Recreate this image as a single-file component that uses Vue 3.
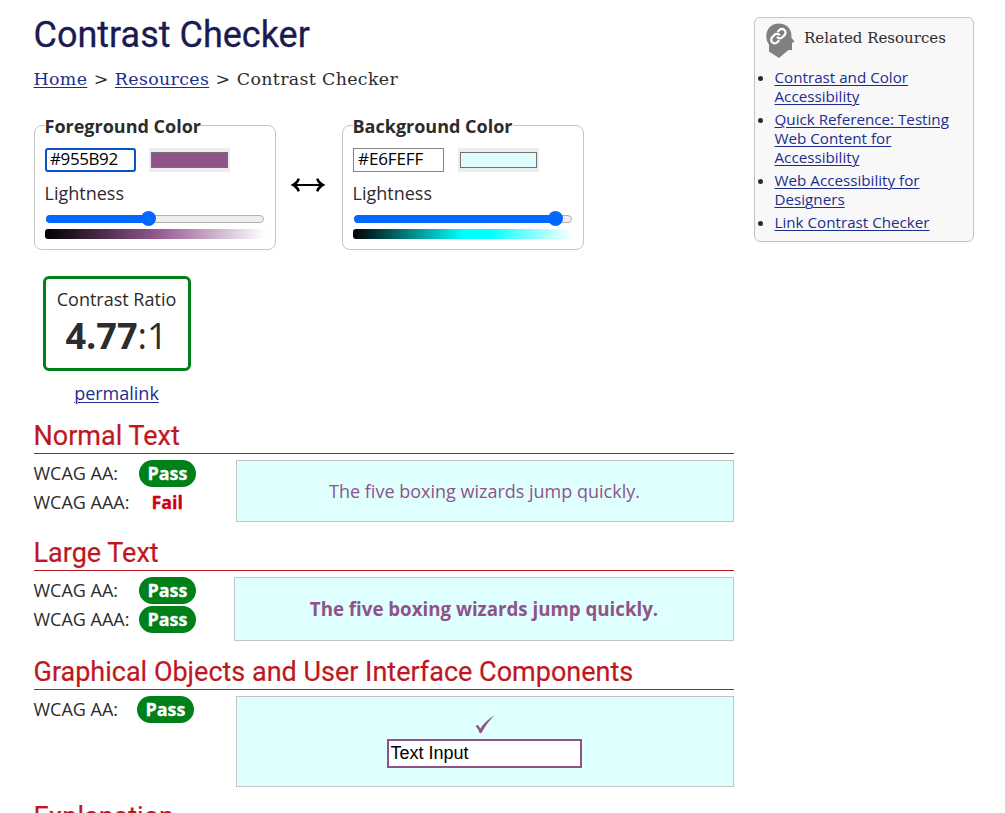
<script setup>
import { ref } from 'vue'

const panels = ref([
  { title: 'Foreground Color', hex: '#955B92', kind: 'fg', position: 102 },
  { title: 'Background Color', hex: '#E6FEFF', kind: 'bg', position: 201 },
])
const textInput = ref('Text Input')
</script>

<template>
  <div class="page">
    <main>
      <h1><span>Contrast Checker</span></h1>
      <nav class="crumbs"><a>Home</a><i>&gt;</i><a>Resources</a><i>&gt;</i><span class="here">Contrast Checker</span></nav>

      <div class="pickers">
        <template v-for="(p, n) in panels" :key="p.kind">
          <div v-if="n" class="swap">
            <svg width="36" height="18" viewBox="0 0 36 18">
              <path d="M4 9H32" stroke="#000" stroke-width="2" fill="none" />
              <path d="M.5 9Q6 6.500 7.600 2.300L10 3Q9 6.600 6 9Q9 11.400 10 15L7.600 15.700Q6 11.500.5 9ZM35.500 9Q30 6.500 28.400 2.300L26 3Q27 6.600 30 9Q27 11.400 26 15L28.400 15.700Q30 11.500 35.500 9Z" fill="#000" />
            </svg>
          </div>
          <section class="panel" :class="p.kind">
            <h3><span>{{ p.title }}</span></h3>
            <div class="values">
              <input v-model="p.hex" type="text" class="hex" />
              <div class="swatch"><div></div></div>
            </div>
            <div class="label">Lightness</div>
            <div class="slider">
              <div class="fill" :style="{ width: p.position + 'px' }"></div>
              <div class="thumb" :style="{ left: p.position - 8 + 'px' }"></div>
            </div>
            <div class="ramp"></div>
          </section>
        </template>
      </div>

      <div class="result">
        <div class="ratio">
          <div class="ratio-label">Contrast Ratio</div>
          <div class="ratio-value"><b>4.77</b>:1</div>
        </div>
        <a class="permalink">permalink</a>
      </div>

      <section class="level normal">
        <h2>Normal Text</h2>
        <div class="row">
          <div class="scores">
            <div><span class="name">WCAG AA:</span><b class="pass">Pass</b></div>
            <div><span class="name">WCAG AAA:</span><b class="fail">Fail</b></div>
          </div>
          <div class="sample"><span>The five boxing wizards jump quickly.</span></div>
        </div>
      </section>

      <section class="level large">
        <h2>Large Text</h2>
        <div class="row">
          <div class="scores">
            <div><span class="name">WCAG AA:</span><b class="pass">Pass</b></div>
            <div><span class="name">WCAG AAA:</span><b class="pass">Pass</b></div>
          </div>
          <div class="sample"><b>The five boxing wizards jump quickly.</b></div>
        </div>
      </section>

      <section class="level objects">
        <h2>Graphical Objects and User Interface Components</h2>
        <div class="row">
          <div class="scores">
            <div><span class="name">WCAG AA:</span><b class="pass">Pass</b></div>
          </div>
          <div class="sample">
            <svg class="check" width="20" height="19" viewBox="0 0 20 19">
              <path d="M.5 11.200Q2 9.600 3.600 10.400L5.200 13.700Q11 5 19.400.4Q12 7.500 6.200 18.200H4.700Q3 13 .5 11.200Z" fill="#905389" />
            </svg>
            <input v-model="textInput" type="text" />
          </div>
        </div>
      </section>

      <h2 class="explanation">Explanation</h2>
    </main>

    <aside>
      <div class="aside-head">
        <svg width="30" height="36" viewBox="0 0 30 36">
          <path d="M13.500.5C20 .3 26.300 4.600 26.500 12L26.300 14.500L29.500 18.500L27 20V27H23.500L14 35L4 28.500V21.500C-1 15.500.2 1.200 13.500.5Z" fill="#808080" />
          <g fill="none" stroke="#fff" stroke-width="3.100" transform="translate(4.700 4.500) scale(.72)">
            <path d="M10 13a5 5 0 0 0 7.540.540l3-3a5 5 0 0 0-7.070-7.070l-2.720 2.710" />
            <path d="M14 11a5 5 0 0 0-7.540-.540l-3 3a5 5 0 0 0 7.070 7.070l2.710-2.710" />
          </g>
        </svg>
        <h4>Related Resources</h4>
      </div>
      <ul>
        <li><a>Contrast and Color<br />Accessibility</a></li>
        <li><a>Quick Reference: Testing<br />Web Content for<br />Accessibility</a></li>
        <li><a>Web Accessibility for<br />Designers</a></li>
        <li><a>Link Contrast Checker</a></li>
      </ul>
    </aside>
  </div>
</template>

<style>
html,
body {
  background: #fff;
  overflow: hidden;
}
</style>

<style scoped>
* {
  box-sizing: border-box;
}
.page {
  height: 813px;
  overflow: hidden;
  display: flex;
  align-items: flex-start;
  gap: 20px;
  padding: 0 0 0 34px;
  font-family: 'Open Sans', 'Noto Sans', sans-serif;
  font-size: 18px;
  color: #2c2c2c;
  white-space: nowrap;
}
main {
  width: 700px;
  flex: none;
}
h1,
h2,
h3,
h4 {
  margin: 0;
}
a {
  color: #1d2d8f;
  text-decoration: underline;
  text-decoration-thickness: 1px;
  text-underline-offset: 2px;
}
h1 {
  font: 400 36px/42px Roboto, sans-serif;
  padding-top: 14px;
  height: 56px;
  color: #1b1b52;
  margin-left: -0.5px;
  -webkit-text-stroke: 0.3px;
}
.crumbs {
  font: 17.4px/24px 'DejaVu Serif', serif;
  letter-spacing: 0.35px;
  margin: 11px 0 0 -0.5px;
  height: 24px;
}
.crumbs i {
  font-style: normal;
  margin: 0 6.3px;
}
.pickers {
  display: flex;
  margin-top: 34px;
  height: 125px;
}
.panel {
  width: 242px;
  height: 125px;
  border: 1px solid #c4c4c4;
  border-radius: 8px;
  padding: 0 10px;
}
.panel h3 {
  font-size: 18px;
  line-height: 24px;
  height: 22px;
  margin-top: -12px;
  text-indent: -0.5px;
}
.panel h3 span {
  background: #fff;
}
.values {
  display: flex;
  gap: 14px;
  height: 24px;
  margin-top: 12px;
}
.fg .values {
  gap: 13px;
}
.hex {
  width: 91px;
  height: 24px;
  border: 1px solid #858585;
  background: #fff;
  padding: 0 0 3px 4px;
  font: 17px/20px 'Open Sans', sans-serif;
  letter-spacing: -0.1px;
  color: #000;
  outline: none;
}
.fg .hex {
  border: 2px solid #0a53c5;
  border-radius: 3px;
  padding: 0 0 3px 3px;
  letter-spacing: -0.4px;
}
.swatch {
  width: 81px;
  height: 24px;
  background: #ededed;
  padding: 4px 2px;
}
.swatch div {
  height: 16px;
  border: 1px solid #717171;
  background: #dfffff;
}
.fg .swatch div {
  background: #905389;
}
.label {
  line-height: 24px;
  margin-top: 9px;
  text-indent: -0.5px;
}
.slider {
  position: relative;
  margin: 10px 0 0 1px;
  width: 218px;
  height: 8px;
  border: 1px solid #b2b2b2;
  border-radius: 4px;
  background: #ededed;
}
.fill {
  margin: -1px;
  height: 8px;
  border-radius: 4px;
  background: #0068ff;
}
.thumb {
  position: absolute;
  top: -5px;
  width: 15px;
  height: 15px;
  border-radius: 50%;
  background: #0068ff;
}
.ramp {
  margin-top: 6px;
  height: 10px;
  border-radius: 3px;
  background: linear-gradient(90deg, #000, #92558e 50%, #fff);
}
.bg .ramp {
  background: linear-gradient(90deg, #000, #00ffff 50%, #00ffff 62%, #fff);
}
.swap {
  width: 66px;
  padding: 50px 0 0 14px;
}
.result {
  width: 148px;
  margin: 26px 0 0 9px;
  display: flex;
  flex-direction: column;
  align-items: center;
}
.ratio {
  width: 148px;
  height: 95px;
  border: 3px solid #008018;
  border-radius: 6px;
  text-align: center;
  padding: 8px 1px 0 0;
}
.ratio-label {
  line-height: 24px;
}
.ratio-value {
  font-size: 36px;
  line-height: 50px;
}
.permalink {
  line-height: 24px;
  margin: 10px 1px 0 0;
}
.level {
  height: 118px;
}
.level.normal {
  margin-top: 14px;
  height: 117px;
}
.level.large {
  height: 119px;
}
.level.objects {
  height: 145px;
}
h2 {
  font: 400 27px/34px Roboto, sans-serif;
  color: #bf1722;
  height: 35px;
  border-bottom: 1px solid #bf1722;
  text-indent: -0.5px;
  -webkit-text-stroke: 0.2px;
}
.row {
  display: flex;
  justify-content: space-between;
  margin-top: 6px;
}
.scores div {
  display: flex;
  height: 27px;
  line-height: 27px;
  margin-bottom: 2px;
}
.name {
  width: 105px;
  text-indent: -0.5px;
  line-height: 27px;
}
.objects .name {
  width: 103px;
}
.pass {
  width: 57px;
  height: 27px;
  line-height: 26px;
  border-radius: 14px;
  text-align: center;
  background: #008018;
  color: #fff;
  font-size: 17.9px;
  -webkit-text-stroke: 0.3px;
}
.fail {
  color: #cc0018;
  margin-left: 12.5px;
  line-height: 27px;
  font-size: 17.9px;
  -webkit-text-stroke: 0.3px;
}
.sample {
  width: 498px;
  height: 62px;
  border: 1px solid #c0c5c7;
  background: #dfffff;
  color: #905389;
  display: flex;
  align-items: center;
  justify-content: center;
  padding: 0 1px 1px 0;
}
.large .sample {
  width: 500px;
  height: 64px;
  font-size: 18.7px;
  padding-right: 0;
}
.objects .sample {
  height: 91px;
  flex-direction: column;
  justify-content: flex-start;
  padding: 18px 1px 0 0;
}
.objects input {
  width: 195px;
  height: 29px;
  margin: 5px 1px 0 0;
  border: 2px solid #905389;
  padding: 0 2px;
  font: 18px 'Liberation Sans', sans-serif;
  color: #000;
  background: #fff;
}
.explanation {
  border: 0;
}
aside {
  width: 220px;
  height: 225px;
  margin-top: 17px;
  border: 1px solid #c4c4c4;
  border-radius: 6px;
  background: #f8f8f8;
  padding: 5px 0 0 10px;
}
.aside-head {
  display: flex;
  gap: 9px;
  height: 36px;
}
h4 {
  font: 400 15px/30px 'DejaVu Serif', serif;
}
ul {
  margin: 9px 0 0 -0.5px;
  padding: 0 0 0 10px;
  font-size: 15.2px;
  line-height: 19px;
}
li {
  margin-bottom: 4px;
}
</style>
